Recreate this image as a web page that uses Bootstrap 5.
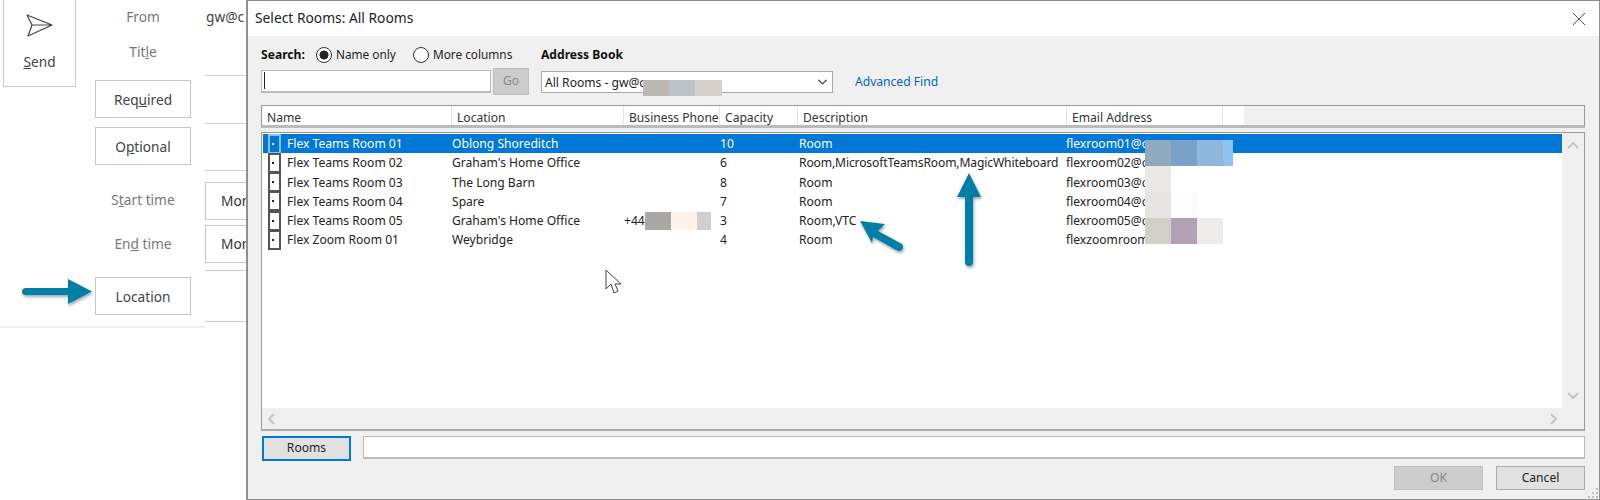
<!DOCTYPE html>
<html lang="en">
<head>
<meta charset="utf-8">
<title>Select Rooms</title>
<link href="https://cdn.jsdelivr.net/npm/bootstrap@5.3.0/dist/css/bootstrap.min.css" rel="stylesheet">
<style>
html,body{height:500px;overflow:hidden;background:#fff}
body{font-family:"Noto Sans","Open Sans",sans-serif;font-size:12.1px;color:#222;position:relative;width:1600px}
.compose{height:326px;border-bottom:2px solid #eee;width:205px;box-sizing:content-box;padding-right:0}
.compose-wrap{height:328px}
.send-box{width:73px;height:87px;margin-left:3px;border:1px solid #c8c8c8;border-top:0;flex:none;font-size:13.7px;color:#444}
.send-box svg{margin-top:14px;margin-bottom:14px}
.ctl-col{width:96px;margin-left:19px;flex:none}
.lab{font-size:13.7px;color:#777;height:38px;line-height:38px;text-align:center;white-space:nowrap}
.ctl{display:block;width:96px;height:38px;border:1px solid #c6c6c6;background:#fff;border-radius:0;font-size:13.7px;color:#444;padding:2px 0 0;line-height:30px;text-align:center}
.ctl-gap{margin-bottom:9px}
.fld-col{position:absolute;left:205px;top:0;width:45px;overflow:hidden;font-size:13.7px;color:#444}
.f-row{border-bottom:1px solid #ccc}
.f-box{border:1px solid #c6c6c6;height:38px;width:60px;padding:0 0 0 15px;line-height:36px;white-space:nowrap;color:#333}
.dlg{position:absolute;left:246px;top:0;right:0;bottom:0;border:1px solid #8f8f8f;border-left-width:2px;background:#f0f0f0;display:flex;flex-direction:column}
.dlg-title{height:35px;background:#fff;padding:0 7px;flex:none;font-size:13.8px;color:#222}
.dlg-x{width:14px;height:14px;margin-right:6px}
.dlg-body{padding:9px 14px 0 13px;flex:1;min-height:0;display:flex;flex-direction:column}
.search-l{width:280px;flex:none}
.b-lab{font-weight:700;font-size:12.1px;color:#111}
.rad{width:16px;height:16px;margin:0 4px 0 0;flex:none;border:1px solid #333;background-color:#fff;border-radius:50%;appearance:none;display:inline-block}
.rad-on{background-image:radial-gradient(circle,#222 0 4.2px,transparent 4.8px)}
.rad-txt{font-size:11.8px}
.s-input{width:230px;height:23px;border:1px solid #bbb;border-bottom-width:2px;background:#fff;flex:none;border-radius:0;padding:1px 2px;line-height:1}
.caretbar{display:block;width:1px;height:17px;background:#222}
.go{width:36px;height:27px;margin-left:2px;background:#ccc;border:1px solid #bfbfbf;border-radius:0;color:#888;padding:0;font-size:12.1px}
.s-sel{width:292px;height:22px;border:1px solid #aaa;border-radius:0;font-size:12.1px;padding:2px 0 0 3px;background-color:#fff;color:#222;background-size:13px 10px;background-position:right 3px center}
.adv{color:#0066cc;text-decoration:none;margin-left:22px;font-size:12.1px;padding-top:2px}
.hdr{height:23px;margin-top:10px;border:1px solid #999;border-bottom:3px solid #bbb;background:#f0f0f0;flex:none;display:flex}
.hc{height:100%;background:#fff;border-right:1px solid #e4e4e4;padding-left:5px;line-height:23px;color:#333;white-space:nowrap;overflow:hidden;flex:none}
.w1{width:190px}.w2{width:172px}.w3{width:96px}.w4{width:78px}.w5{width:269px}.w6{width:156px}.w7{width:21px;border-right:0}
.lst{height:299px;margin-top:4px;border:1px solid #999;border-bottom:2px solid #aaa;display:flex;flex-direction:column;flex:none;background:#f0f0f0}
.lst-top{flex:1;display:flex;min-height:0}
.lst-rows{flex:1;background:#fff;padding:1px 0 0 1px}
.rw{height:19.25px;display:flex;align-items:center;color:#222;white-space:nowrap;padding-top:1px}
.rw-on{background:#0078d7;color:#fff}
.ic-box{width:13px;height:20px;margin:-1px 6px 0 5px;border:2px solid #555;background:#fff;flex:none;position:relative}
.ic-box::after{content:"";position:absolute;left:2px;top:7px;width:2px;height:2px;background:#222}
.rw-on .ic-box{border-color:#8fc0e8;background:#0078d7}
.rw-on .ic-box::after{background:#fff}
.c1{width:165px}.c2{width:172px}.c3{width:96px}.c4{width:79px}.c5{width:267px}
.c1,.c2,.c3,.c4,.c5{flex:none}
.tight{letter-spacing:-.13px}
.vs{width:22px;flex:none;background:#f0f0f0;padding:8px 0 8px 0}
.hs{height:21px;flex:none;padding:0 26px 0 5px}
.rooms{width:89px;height:25px;margin-left:1px;background:#e1e1e1;border:2px solid #0078d7;border-radius:0;padding:0;font-size:12.1px;color:#222;flex:none}
.r-inp{flex:1;height:23px;margin-left:12px;border:1px solid #bbb;border-bottom-width:2px;background:#fff}
.b-row{margin-top:5px;flex:none}
.dlg-btn{width:89px;height:24px;border:1px solid #adadad;background:#e1e1e1;border-radius:0;padding:0;font-size:12.1px;color:#222}
.dlg-btn-off{background:#ccc;border-color:#bfbfbf;color:#888;margin-right:13px}
.f-row-end{margin-top:5px;flex:none}
.grip{position:absolute;right:0;bottom:0}
.blur{position:absolute;display:grid}
.blur span{display:block}
.ovl{position:absolute;left:0;top:0;pointer-events:none}
.blur-sel{left:643px;top:80px;width:79px;height:16px;grid-template-columns:26px 26px 27px}
.blur-ph{left:645px;top:212px;width:66px;height:18px;grid-template-columns:26px 26px 14px}
.blur-em{left:1145px;top:140px;width:88px;height:104px;grid-template-columns:26px 26px 26px 10px;grid-template-rows:26px 26px 26px 26px}
.lab-from{height:35px;line-height:34px}
.lab-title{height:45px;line-height:34px}
.mt-start{margin-top:16px}
.mt-end{margin-top:6px}
.mt-loc{margin-top:14px}
.f-from{height:35px;line-height:34px;margin-left:1px}
.h41{height:41px}.h47{height:47px}.h48{height:48px}.h8{height:8px}.h51{height:51px}
.mt-box1{margin-top:11px}.mt-box2{margin-top:5px}
.sh20{height:20px}.sh27{height:27px;margin-top:3px}.mt3px{margin-top:3px}
.wsearch{width:55px}.wname{width:77px}
.p1{background:#bdb8b3}.p2{background:#bcc2c8}.p3{background:#d5d0ca}
.p4{background:#a9a7a4}.p5{background:#fdf3ea}.p6{background:#cfcfcf}
.e1{background:#8fa9bd}.e2{background:#7ba0c9}.e3{background:#90b6dc}.e4{background:#8fc3ef}
.e5{background:#ebe8e6}.e6{background:#fff}.e7{background:#e6e4e0}.e8{background:#fbfcfb}
.e9{background:#d2cfc8}.e10{background:#b0a2b2}.e11{background:#eeeceb}
</style>
</head>
<body>
<div class="compose-wrap">
  <div class="compose d-flex">
    <div class="send-box d-flex flex-column align-items-center">
      <svg width="28" height="24" viewBox="0 0 28 24"><path d="M1 1 L26 11 L2 22 L6 11 Z M6 11 H26" fill="none" stroke="#444" stroke-width="1.2" stroke-linejoin="round"/></svg>
      <span><u>S</u>end</span>
    </div>
    <div class="ctl-col">
      <div class="lab lab-from">From</div>
      <div class="lab lab-title">Tit<u>l</u>e</div>
      <button class="ctl ctl-gap" type="button">Req<u>u</u>ired</button>
      <button class="ctl" type="button">O<u>p</u>tional</button>
      <div class="lab mt-start">S<u>t</u>art time</div>
      <div class="lab mt-end">En<u>d</u> time</div>
      <button class="ctl mt-loc" type="button">Location</button>
    </div>
  </div>
</div>
<div class="fld-col">
  <div class="f-from">gw@c</div>
  <div class="f-row h41"></div>
  <div class="f-row h48"></div>
  <div class="f-row h47"></div>
  <div class="f-box mt-box1">Mon</div>
  <div class="f-box mt-box2">Mon</div>
  <div class="f-row h8"></div>
  <div class="f-row h51"></div>
</div>

<div class="dlg">
  <div class="dlg-title d-flex align-items-center justify-content-between">
    <span>Select Rooms: All Rooms</span>
    <svg class="dlg-x" viewBox="0 0 14 14"><path d="M1 1 L13 13 M13 1 L1 13" stroke="#555" stroke-width="1" fill="none"/></svg>
  </div>
  <div class="dlg-body">
    <div class="d-flex flex-none">
      <div class="search-l">
        <div class="d-flex align-items-center sh20">
          <span class="b-lab wsearch">Search:</span>
          <input class="rad rad-on" type="radio" name="s" checked>
          <span class="wname rad-txt">Name only</span>
          <input class="rad" type="radio" name="s">
          <span class="rad-txt">More columns</span>
        </div>
        <div class="d-flex align-items-center mt3px">
          <div class="s-input"><span class="caretbar"></span></div>
          <button class="go" type="button">Go</button>
        </div>
      </div>
      <div>
        <div class="b-lab d-flex align-items-center sh20">Address Book</div>
        <div class="d-flex align-items-center sh27">
          <select class="form-select s-sel"><option>All Rooms - gw@c</option></select>
          <a class="adv" href="#">Advanced Find</a>
        </div>
      </div>
    </div>

    <div class="hdr">
      <div class="hc w1">Name</div><div class="hc w2">Location</div><div class="hc w3">Business Phone</div><div class="hc w4">Capacity</div><div class="hc w5">Description</div><div class="hc w6">Email Address</div><div class="hc w7"></div>
    </div>

    <div class="lst">
      <div class="lst-top">
        <div class="lst-rows">
          <div class="rw rw-on"><span class="ic-box"></span><span class="c1">Flex Teams Room 01</span><span class="c2">Oblong Shoreditch</span><span class="c3"></span><span class="c4">10</span><span class="c5">Room</span><span>flexroom01@c</span></div>
          <div class="rw"><span class="ic-box"></span><span class="c1">Flex Teams Room 02</span><span class="c2">Graham's Home Office</span><span class="c3"></span><span class="c4">6</span><span class="c5 tight">Room,MicrosoftTeamsRoom,MagicWhiteboard</span><span>flexroom02@c</span></div>
          <div class="rw"><span class="ic-box"></span><span class="c1">Flex Teams Room 03</span><span class="c2">The Long Barn</span><span class="c3"></span><span class="c4">8</span><span class="c5">Room</span><span>flexroom03@c</span></div>
          <div class="rw"><span class="ic-box"></span><span class="c1">Flex Teams Room 04</span><span class="c2">Spare</span><span class="c3"></span><span class="c4">7</span><span class="c5">Room</span><span>flexroom04@c</span></div>
          <div class="rw"><span class="ic-box"></span><span class="c1">Flex Teams Room 05</span><span class="c2">Graham's Home Office</span><span class="c3">+44</span><span class="c4">3</span><span class="c5">Room,VTC</span><span>flexroom05@c</span></div>
          <div class="rw"><span class="ic-box"></span><span class="c1">Flex Zoom Room 01</span><span class="c2">Weybridge</span><span class="c3"></span><span class="c4">4</span><span class="c5">Room</span><span>flexzoomroom</span></div>
        </div>
        <div class="vs d-flex flex-column justify-content-between align-items-center">
          <svg width="12" height="8" viewBox="0 0 12 8"><path d="M1 7 L6 2 L11 7" fill="none" stroke="#c4c4c4" stroke-width="2"/></svg>
          <svg width="12" height="8" viewBox="0 0 12 8"><path d="M1 1 L6 6 L11 1" fill="none" stroke="#c4c4c4" stroke-width="2"/></svg>
        </div>
      </div>
      <div class="hs d-flex justify-content-between align-items-center">
        <svg width="8" height="12" viewBox="0 0 8 12"><path d="M7 1 L2 6 L7 11" fill="none" stroke="#c4c4c4" stroke-width="2"/></svg>
        <svg width="8" height="12" viewBox="0 0 8 12"><path d="M1 1 L6 6 L1 11" fill="none" stroke="#c4c4c4" stroke-width="2"/></svg>
      </div>
    </div>

    <div class="d-flex b-row align-items-start">
      <button class="rooms" type="button">Rooms</button>
      <div class="r-inp"></div>
    </div>
    <div class="d-flex justify-content-end f-row-end">
      <button class="dlg-btn dlg-btn-off" type="button">OK</button>
      <button class="dlg-btn" type="button">Cancel</button>
    </div>
  </div>
  <svg class="grip" width="11" height="11" viewBox="0 0 11 11"><path d="M8 0h2v2H8zM4 4h2v2H4zM8 4h2v2H8zM0 8h2v2H0zM4 8h2v2H4zM8 8h2v2H8z" fill="#bdbdbd"/></svg>
</div>

<div class="blur blur-sel"><span class="p1"></span><span class="p2"></span><span class="p3"></span></div>
<div class="blur blur-ph"><span class="p4"></span><span class="p5"></span><span class="p6"></span></div>
<div class="blur blur-em">
  <span class="e1"></span><span class="e2"></span><span class="e3"></span><span class="e4"></span>
  <span class="e5"></span><span class="e6"></span><span class="e6"></span><span></span>
  <span class="e7"></span><span class="e8"></span><span class="e6"></span><span></span>
  <span class="e9"></span><span class="e10"></span><span class="e11"></span><span></span>
</div>

<svg class="ovl" width="1600" height="500" viewBox="0 0 1600 500">
  <defs><filter id="sh" x="-30%" y="-30%" width="160%" height="160%"><feDropShadow dx="1" dy="2" stdDeviation="1.5" flood-color="#000" flood-opacity=".35"/></filter></defs>
  <g fill="#007fa6" filter="url(#sh)">
    <path d="M68 279 L92 291.500 L68 304 L68 295 L26 295 Q22 295 22 291.500 Q22 288 26 288 L68 288 Z"/>
    <path d="M969 173 L981 197 L973 197 L973 262 Q973 266 969 266 Q965 266 965 262 L965 197 L957 197 Z"/>
    <path d="M860 221 L885 224 L878 231 L902 244 Q904 247 902 250 Q899 252 896 250 L873 237 L872 243 Z"/>
  </g>
  <path d="M606 270 L606 289 L611 284 L614 293 L618 291 L615 284 L621 284 Z" fill="#fff" stroke="#444" stroke-width="1"/>
</svg>
<script src="https://cdn.jsdelivr.net/npm/bootstrap@5.3.0/dist/js/bootstrap.bundle.min.js"></script>
</body>
</html>
